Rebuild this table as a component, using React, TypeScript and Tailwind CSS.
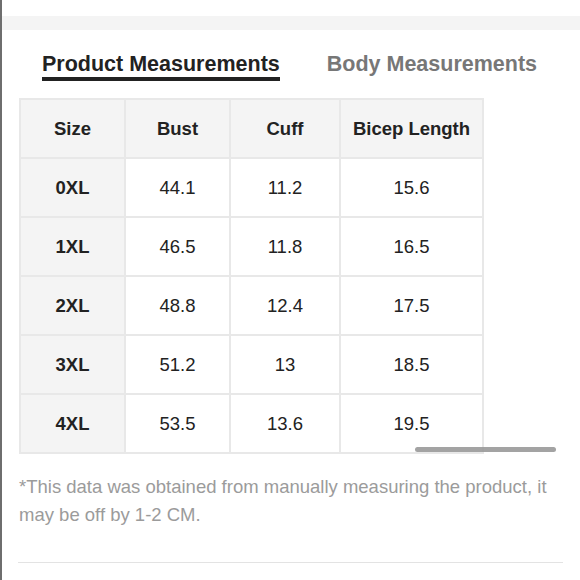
const rows = [
  { size: "0XL", bust: "44.1", cuff: "11.2", bicep: "15.6" },
  { size: "1XL", bust: "46.5", cuff: "11.8", bicep: "16.5" },
  { size: "2XL", bust: "48.8", cuff: "12.4", bicep: "17.5" },
  { size: "3XL", bust: "51.2", cuff: "13", bicep: "18.5" },
  { size: "4XL", bust: "53.5", cuff: "13.6", bicep: "19.5" },
];

const cell = "h-[57px] flex items-center justify-center text-[18.5px] text-[#222]";

export default function App() {
  return (
    <div
      className="relative w-[580px] h-[580px] overflow-hidden bg-white border-l-2 border-[#6e6e6e]"
      style={{ fontFamily: '"Liberation Sans", Arial, sans-serif' }}
    >
      {/* top band */}
      <div className="mt-[16px] h-[14px] bg-[#f4f4f4]" />

      {/* tabs */}
      <div className="flex pt-[22px]">
        <div className="ml-[40px] flex flex-col">
          <span className="text-[21.5px] leading-[25px] font-bold text-[#222]">Product Measurements</span>
          <div className="h-[4px] bg-[#222]" />
        </div>
        <span className="ml-[47px] text-[21.5px] leading-[25px] font-bold text-[#777]">Body Measurements</span>
      </div>

      {/* table */}
      <div className="ml-[17px] mt-[17px] w-[465px] grid grid-cols-[103px_103px_108px_141px] gap-[2px] p-[2px] bg-[#e8e8e8]">
        {["Size", "Bust", "Cuff", "Bicep Length"].map((h) => (
          <div key={h} className={`${cell} bg-[#f4f4f4] font-bold`}>
            {h}
          </div>
        ))}
        {rows.map((r) => (
          <div key={r.size} className="contents">
            <div className={`${cell} bg-[#f4f4f4] font-bold`}>{r.size}</div>
            <div className={`${cell} bg-white`}>{r.bust}</div>
            <div className={`${cell} bg-white`}>{r.cuff}</div>
            <div className={`${cell} bg-white`}>{r.bicep}</div>
          </div>
        ))}
      </div>

      {/* scroll thumb */}
      <div className="absolute left-[413px] top-[447px] w-[141px] h-[5px] rounded-full bg-[#999]/90" />

      <p className="ml-[17px] mt-[19px] mr-[20px] text-[18.5px] leading-[28px] text-[#9b9b9b]">
        *This data was obtained from manually measuring the product, it may be off by 1-2 CM.
      </p>

      <div className="absolute left-[16px] top-[562px] w-[545px] h-px bg-[#e3e3e3]" />
    </div>
  );
}
